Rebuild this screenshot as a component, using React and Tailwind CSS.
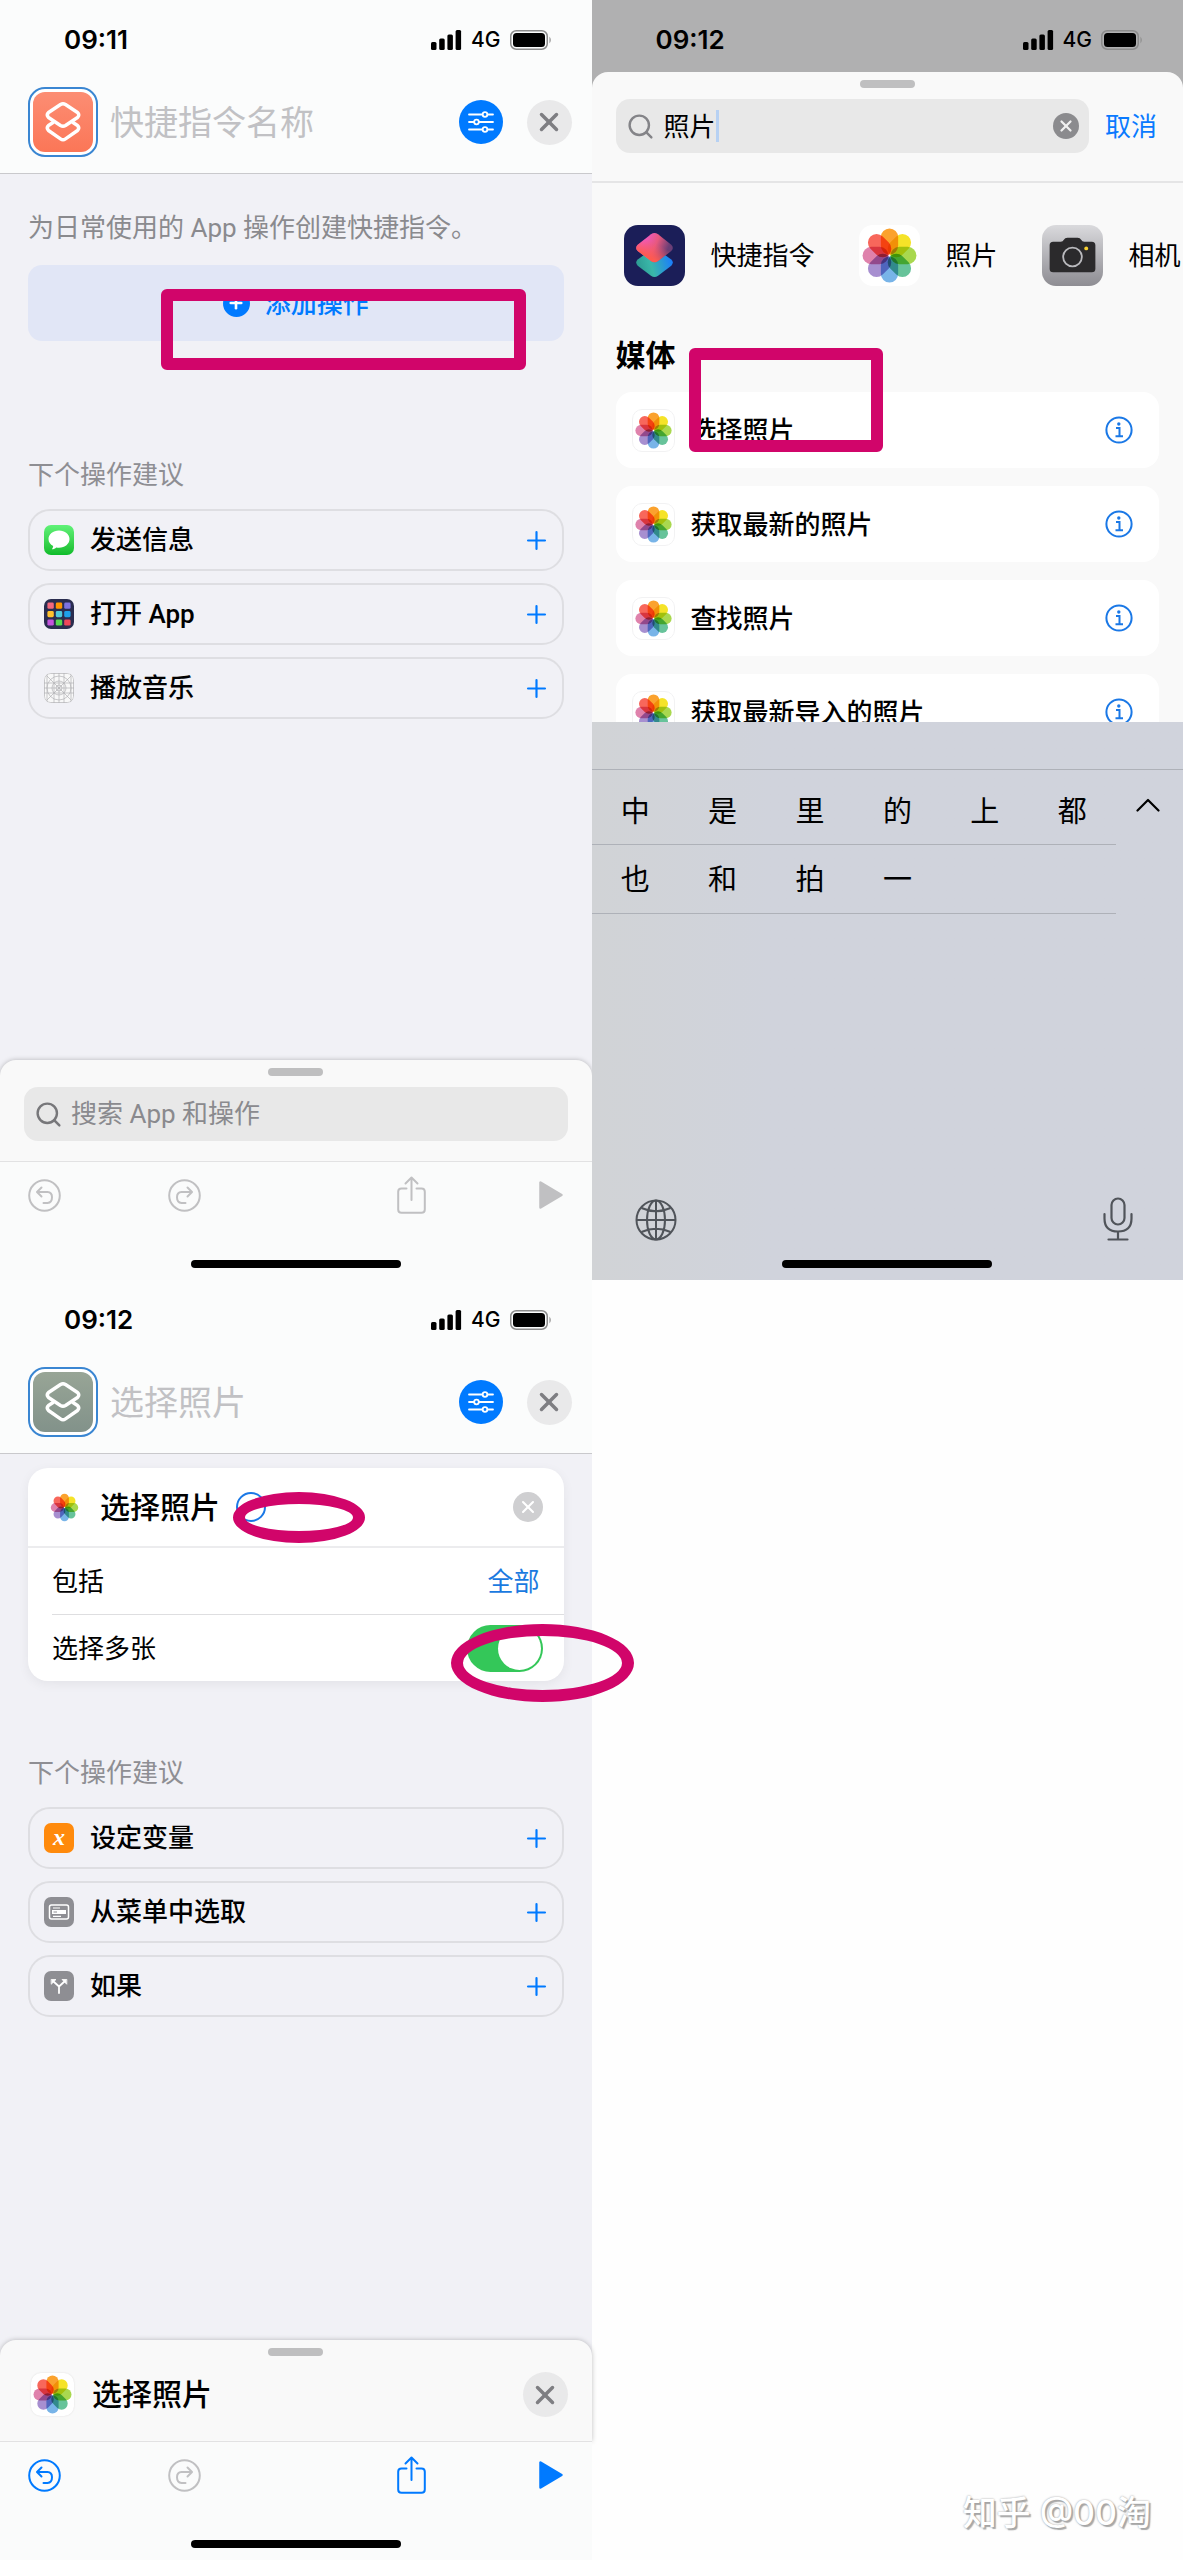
import { useState } from "react";
import { Plus, Search, X } from "lucide-react";

const petals = ["#fba22e", "#f5e328", "#a9d84f", "#67c39a", "#78b4e8", "#a78fd0", "#df82ac", "#f8675b"];

const PhotosIcon = ({ className }) => (
  <svg viewBox="0 0 60 60" className={`isolate shrink-0 bg-white ${className}`}>
    {petals.map((color, i) => (
      <rect
        key={color}
        x="21.5"
        y="3.5"
        width="17"
        height="25.5"
        rx="8.5"
        fill={color}
        transform={`rotate(${i * 45} 30 30)`}
        className="mix-blend-multiply"
      />
    ))}
  </svg>
);

const StatusBar = ({ time }) => (
  <div className="flex items-center justify-between pl-16 pr-10 leading-8">
    <span className="text-[26px] font-semibold">{time}</span>
    <div className="flex items-center gap-[9px]">
      <svg width="31" height="20" viewBox="0 0 31 20">
        <rect x="0" y="12" width="5.5" height="8" rx="1.5" />
        <rect x="8.2" y="8.5" width="5.5" height="11.5" rx="1.5" />
        <rect x="16.4" y="4.5" width="5.5" height="15.5" rx="1.5" />
        <rect x="24.6" y="0" width="5.5" height="20" rx="1.5" />
      </svg>
      <span className="text-[21px] font-medium">4G</span>
      <svg width="42" height="20" viewBox="0 0 42 20">
        <rect x="0.75" y="0.75" width="36.5" height="18.5" rx="5.5" fill="none" stroke="#8b8b8b" strokeWidth="1.5" />
        <rect x="3" y="3" width="32" height="14" rx="3.5" />
        <path d="M39.5 6.5q2.5 3.5 0 7z" fill="#8b8b8b" />
      </svg>
    </div>
  </div>
);

const CloseButton = ({ label }) => (
  <button aria-label={label} className="flex size-[45px] shrink-0 items-center justify-center rounded-full bg-[#e9e9ea] text-[#7e7e82]">
    <X size={30} strokeWidth={2.8} />
  </button>
);

const EditorHeader = ({ time, name, tile }) => (
  <header className="border-b border-[#c9c9cc] bg-[#fbfcfc] pb-4 pt-6">
    <StatusBar time={time} />
    <div className="mt-[31px] flex items-center pl-7 pr-5">
      <button aria-label="图标" className="size-[70px] shrink-0 rounded-[17px] border-2 border-[#3a86d2] bg-white p-[3px]">
        <svg viewBox="0 0 60 60" fill="none" stroke="#fff" strokeWidth="3.4" strokeLinejoin="round" strokeLinecap="round" className={`size-full rounded-xl ${tile}`}>
          <path d="M27.5 12.5Q30 11 32.5 12.5L44.5 20.5Q47 23 44.5 25.5L32.5 33.5Q30 35 27.5 33.5L15.5 25.5Q13 23 15.5 20.5Z" />
          <path d="M20 30.5L15.5 33.5Q13 36 15.5 38.5L27.5 46.8Q30 48.5 32.5 46.8L44.5 38.5Q47 36 44.5 33.5L40 30.5" />
        </svg>
      </button>
      <input
        aria-label="快捷指令名称"
        placeholder={name}
        className="ml-3 h-12 min-w-0 flex-1 bg-transparent text-[34px] placeholder:text-[#c1c1c4] outline-none"
      />
      <button aria-label="设置" className="size-11 shrink-0 rounded-full bg-[#007aff]">
        <svg viewBox="0 0 44 44" fill="#007aff" stroke="#fff" strokeWidth="1.8" strokeLinecap="round">
          <path d="M10 14.5H34M10 22H34M10 29.5H34" />
          <circle cx="26" cy="14.5" r="2.3" />
          <circle cx="17.5" cy="22" r="2.3" />
          <circle cx="26" cy="29.5" r="2.3" />
        </svg>
      </button>
      <div className="ml-6 flex">
        <CloseButton label="关闭" />
      </div>
    </div>
  </header>
);

const MessagesIcon = () => (
  <svg viewBox="0 0 30 30" className="size-full bg-linear-to-b from-[#5ff277] to-[#0abc29]">
    <path fill="#fff" d="M15 5.5C9 5.5 4.5 9.3 4.5 14c0 3 1.8 5.600 4.7 7.1-.1 1.3-.6 2.3-1.3 3.2 1.8-.2 3.3-.8 4.4-1.9.9.2 1.8.3 2.7.3 6 0 10.5-3.900 10.5-8.700S21 5.500 15 5.500z" />
  </svg>
);

const appColors = ["#f4687c", "#ff9500", "#7e73e0", "#ffc22e", "#4fc9dd", "#1ea0ea", "#c455dc", "#57d94f", "#f0475a"];

const AppsIcon = () => (
  <svg viewBox="0 0 30 30" className="size-full bg-[#2a2d4f]">
    {appColors.map((color, i) => (
      <rect key={color} x={3.4 + (i % 3) * 8.4} y={3.6 + Math.floor(i / 3) * 8.4} width="6.4" height="6.2" rx="1.4" fill={color} />
    ))}
  </svg>
);

const BlankAppIcon = () => (
  <svg viewBox="0 0 30 30" fill="none" stroke="#b2b2b4" strokeWidth="0.7" className="size-full bg-[#f8f8f8]">
    <rect x="0.5" y="0.5" width="29" height="29" rx="6" />
    <path d="M3 3L27 27M27 3L3 27M10 0V30M15 0V30M20 0V30M0 10H30M0 15H30M0 20H30M3 0V30M27 0V30" />
    <circle cx="15" cy="15" r="12" />
    <circle cx="15" cy="15" r="7" />
    <circle cx="15" cy="15" r="3" />
  </svg>
);

const VariableIcon = () => (
  <span className="flex size-full items-center justify-center bg-[#ff8a0c] pb-[3px] font-['Liberation_Serif',serif] text-2xl leading-none font-bold italic text-white">x</span>
);

const MenuIcon = () => (
  <svg viewBox="0 0 30 30" fill="none" stroke="#fff" className="size-full bg-[#8e8e93]">
    <rect x="5.5" y="8" width="19" height="14" rx="2" strokeWidth="1.5" />
    <rect x="8" y="13" width="14" height="4" fill="#fff" stroke="none" />
    <path d="M9 11H16M9 19.3H17" strokeWidth="1.2" />
    <path d="M9.5 15H13" stroke="#8e8e93" />
  </svg>
);

const BranchIcon = () => (
  <svg viewBox="0 0 30 30" fill="none" stroke="#fff" strokeWidth="1.8" strokeLinecap="round" className="size-full bg-[#8e8e93]">
    <path d="M15 22V15.5L9.5 10.5M15 15.5L20.5 10.5" />
    <path d="M7.5 8.5H12L7.5 13ZM22.5 8.5H18L22.5 13Z" fill="#fff" strokeWidth="0.8" strokeLinejoin="round" />
  </svg>
);

const Suggestions = ({ items }) => (
  <section>
    <h2 className="text-[26px] leading-8 text-[#8e8e93]">下个操作建议</h2>
    <ul className="mt-[18px] flex flex-col gap-3">
      {items.map((item) => (
        <li key={item.label}>
          <button className="flex h-[62px] w-full items-center rounded-[22px] border-2 border-[#dedee2] pl-3.5 pr-[11px] text-left">
            <span className="size-[30px] overflow-hidden rounded-[7px]">
              <item.icon />
            </span>
            <span className="ml-4 flex-1 font-['Roboto','Noto_Sans_CJK_SC',sans-serif] text-[26px] font-medium">{item.label}</span>
            <Plus size={29} strokeWidth={1.8} className="text-[#007aff]" />
          </button>
        </li>
      ))}
    </ul>
  </section>
);

const Grabber = () => <div className="mx-auto h-2 w-[55px] rounded-full bg-[#bfbfc0]" />;

const HomeIndicator = () => <div className="mx-auto h-2 w-[210px] rounded-full bg-black" />;

const BottomSheet = ({ children }) => (
  <div className="rounded-t-2xl bg-[#f9f9f9] pt-2 shadow-[0_0_5px_rgba(0,0,0,0.25)]">
    <Grabber />
    {children}
  </div>
);

const Toolbar = ({ enabled }) => {
  const tone = enabled ? "text-[#007aff]" : "text-[#c0c0c2]";
  return (
    <footer className="relative border-t border-[#e2e2e3] bg-[#fafbfb] pb-3">
      <div className="flex h-[66px] items-center px-7">
        <button aria-label="撤销" className={tone}>
          <svg width="33" height="33" viewBox="0 0 33 33" fill="none" stroke="currentColor" strokeWidth="2" strokeLinecap="round" strokeLinejoin="round">
            <circle cx="16.5" cy="16.5" r="15.3" />
            <path d="M13.5 8.5L9 13L13.5 17.5M9.5 13H19.5Q24 13.2 24 18.2Q24 23.5 19.5 24H15.5" />
          </svg>
        </button>
        <button aria-label="重做" className="ml-[107px] text-[#c0c0c2]">
          <svg width="33" height="33" viewBox="0 0 33 33" fill="none" stroke="currentColor" strokeWidth="2" strokeLinecap="round" strokeLinejoin="round">
            <circle cx="16.5" cy="16.5" r="15.3" />
            <path d="M19.5 8.5L24 13L19.5 17.5M23.5 13H13.5Q9 13.2 9 18.2Q9 23.5 13.5 24H17.5" />
          </svg>
        </button>
        <button aria-label="共享" className={`ml-auto ${tone}`}>
          <svg width="29" height="38" viewBox="0 0 29 38" fill="none" stroke="currentColor" strokeWidth="2" strokeLinecap="round" strokeLinejoin="round">
            <path d="M9.5 12.5H4.5Q1.2 12.5 1.2 15.8V33.5Q1.2 36.8 4.5 36.8H24.5Q27.8 36.8 27.8 33.5V15.8Q27.8 12.5 24.5 12.5H19.5" />
            <path d="M14.5 24V2M8.5 7.5L14.5 1.5L20.5 7.5" />
          </svg>
        </button>
        <button aria-label="播放" className={`ml-[112px] ${tone}`}>
          <svg width="26" height="30" viewBox="0 0 26 30" fill="currentColor" stroke="currentColor" strokeWidth="2.5" strokeLinejoin="round">
            <path d="M2.5 2.5V27.5L23.5 15Z" />
          </svg>
        </button>
      </div>
      <div className="mt-8">
        <HomeIndicator />
      </div>
    </footer>
  );
};

const NewShortcut = () => (
  <section className="relative flex flex-col bg-[#f1f1f6]">
    <EditorHeader time="09:11" name="快捷指令名称" tile="bg-linear-to-b from-[#fc8d73] to-[#fb7657]" />
    <main className="flex-1 px-7 pt-[38px]">
      <p className="font-['Roboto','Noto_Sans_CJK_SC',sans-serif] text-[26px] leading-8 whitespace-nowrap text-[#8a8a8e]">为日常使用的 App 操作创建快捷指令。</p>
      <button className="mt-[21px] flex h-[76px] w-full items-center justify-center gap-[15px] rounded-[14px] bg-[#e1e6f6] text-[26px] font-medium text-[#007aff]">
        <span className="flex size-[27px] items-center justify-center rounded-full bg-[#007aff] text-white">
          <Plus size={18} strokeWidth={3.5} />
        </span>
        添加操作
      </button>
      <div className="mt-[118px]">
        <Suggestions
          items={[
            { label: "发送信息", icon: MessagesIcon },
            { label: "打开 App", icon: AppsIcon },
            { label: "播放音乐", icon: BlankAppIcon },
          ]}
        />
      </div>
    </main>
    <BottomSheet>
      <div className="px-6 pb-5 pt-[11px]">
        <label className="flex h-[54px] items-center gap-2 rounded-[14px] bg-[#e8e8e8] px-2.5">
          <Search size={29} strokeWidth={2} className="text-[#77777a]" />
          <input aria-label="搜索" placeholder="搜索 App 和操作" className="min-w-0 flex-1 bg-transparent font-['Roboto','Noto_Sans_CJK_SC',sans-serif] text-[26px] outline-none placeholder:text-[#8a8a8e]" />
        </label>
      </div>
    </BottomSheet>
    <Toolbar enabled={false} />

    {/* marks the add button */}
    <div className="absolute left-[161px] top-[289px] h-[81px] w-[365px] rounded-md border-12 border-[#d1056a]" />
  </section>
);

const ShortcutsAppIcon = () => (
  <svg viewBox="0 0 60 60" className="size-[61px] shrink-0 rounded-[14px] bg-[#1b1e58]">
    <defs>
      <linearGradient id="upper" x1="0.2" y1="0.3" x2="0.8" y2="0.7" gradientTransform="rotate(-15 .5 .5)">
        <stop offset="0" stopColor="#f05ac4" />
        <stop offset="0.5" stopColor="#e8587e" />
        <stop offset="1" stopColor="#6b3e76" />
      </linearGradient>
      <linearGradient id="upperRed" x1="0.7" y1="0.2" x2="0.3" y2="0.8">
        <stop offset="0.3" stopColor="#ff5a5f" stopOpacity="0" />
        <stop offset="1" stopColor="#ff5a4f" />
      </linearGradient>
      <linearGradient id="lower" x1="0" y1="0.6" x2="1" y2="0.4">
        <stop offset="0" stopColor="#2c9a92" />
        <stop offset="0.4" stopColor="#3ab7a9" />
        <stop offset="1" stopColor="#1a7cff" />
      </linearGradient>
    </defs>
    <path d="M26.5 24.5Q30 22.5 33.5 24.5L46.5 34Q49.5 37 46.5 40L33.5 50Q30 52.5 26.5 50L13.5 40Q10.5 37 13.5 34Z" fill="url(#lower)" />
    <path d="M26.5 9Q30 6.5 33.5 9L46.5 19.5Q49.5 22.5 46.5 25.5L33.5 35.5Q30 38 26.5 35.5L13.5 25.5Q10.5 22.5 13.5 19.5Z" fill="url(#upper)" />
    <path d="M26.5 9Q30 6.5 33.5 9L46.5 19.5Q49.5 22.5 46.5 25.5L33.5 35.5Q30 38 26.5 35.5L13.5 25.5Q10.5 22.5 13.5 19.5Z" fill="url(#upperRed)" />
  </svg>
);

const CameraAppIcon = () => (
  <svg viewBox="0 0 60 60" className="size-[61px] shrink-0 rounded-[14px] bg-linear-to-b from-[#dadadd] to-[#8e8d93]">
    <path fill="#2b2a2c" d="M11 16.5H18.5Q20.5 16.5 21.5 14.5Q22.5 12.5 25 12.5H35Q37.5 12.5 38.5 14.5Q39.5 16.5 41.5 16.5H49Q52.5 16.5 52.5 20V43Q52.5 46.5 49 46.5H11Q7.5 46.5 7.5 43V20Q7.5 16.5 11 16.5Z" />
    <circle cx="30" cy="31.5" r="9.2" fill="none" stroke="#b9b9bd" strokeWidth="1.8" />
    <circle cx="43.5" cy="23" r="1.9" fill="#f8d030" />
  </svg>
);

const mediaActions = ["选择照片", "获取最新的照片", "查找照片", "获取最新导入的照片"];

const InfoIcon = () => (
  <svg width="28" height="28" viewBox="0 0 28 28" fill="none" stroke="#1a78e6" strokeWidth="2">
    <circle cx="14" cy="14" r="12.6" />
    <circle cx="13.8" cy="8" r="1.7" fill="#1a78e6" stroke="none" />
    <path d="M11 12H14.5V20M10.5 20.2H18" />
  </svg>
);

const CandidateRow = ({ words, className }) => (
  <div className={`grid grid-cols-6 border-b border-[#aeb1b8] ${className}`}>
    {words.map((word) => (
      <button key={word} className="text-[29px]">{word}</button>
    ))}
  </div>
);

const Keyboard = () => (
  <div className="relative flex h-[558px] shrink-0 flex-col bg-linear-to-r from-[#d1d3d6] to-[#d0d3dc] to-30% pb-3">
    <div className="h-12 border-b border-[#aeb1b8]" />
    <div className="flex items-start">
      <div className="flex-1">
        <CandidateRow words={["中", "是", "里", "的", "上", "都"]} className="h-[75px] pt-2.5" />
        <CandidateRow words={["也", "和", "拍", "一"]} className="h-[69px] pt-0.5" />
      </div>
      <button aria-label="收起" className="flex w-[67px] justify-center pr-1 pt-7">
        <svg width="24" height="14" viewBox="0 0 24 14" fill="none" stroke="#000" strokeWidth="2.2" strokeLinecap="round" strokeLinejoin="round">
          <path d="M1.5 12.5L12 2L22.5 12.5" />
        </svg>
      </button>
    </div>
    <div className="mt-auto flex items-center justify-between pl-[43px] pr-[50px]">
      <button aria-label="切换键盘">
        <svg width="42" height="42" viewBox="0 0 42 42" fill="none" stroke="#50545a" strokeWidth="2">
          <circle cx="21" cy="21" r="19.5" />
          <ellipse cx="21" cy="21" rx="9" ry="19.5" />
          <path d="M21 1.5V40.5M1.5 21H40.5M6.5 9Q21 15.5 35.5 9M6.5 33Q21 26.5 35.5 33" />
        </svg>
      </button>
      <button aria-label="听写">
        <svg width="30" height="45" viewBox="0 0 30 45" fill="none" stroke="#50545a" strokeWidth="2.2" strokeLinecap="round">
          <rect x="8.5" y="1.5" width="13" height="26" rx="6.5" />
          <path d="M1.5 17V21.5Q1.5 34.5 15 34.5Q28.5 34.5 28.5 21.5V17M15 34.5V42.5M5.5 42.5H24.5" />
        </svg>
      </button>
    </div>
    <div className="mt-[18px]">
      <HomeIndicator />
    </div>
  </div>
);

const SearchActions = () => (
  <section className="relative flex flex-col overflow-hidden bg-[#b0b0b1]">
    <div className="pb-4 pt-6">
      <StatusBar time="09:12" />
    </div>
    <div className="min-h-0 flex-1 basis-0 overflow-hidden rounded-t-2xl bg-[#f9f9f9] pt-2">
      <Grabber />
      <div className="flex items-center border-b-2 border-[#e5e5e6] pb-7 pl-6 pr-[26px] pt-[11px]">
        <div className="flex h-[54px] min-w-0 flex-1 items-center rounded-[14px] bg-[#e8e8e8] px-2.5">
          <Search size={29} strokeWidth={2} className="shrink-0 text-[#848488]" />
          <input aria-label="搜索" defaultValue="照片" className="field-sizing-content ml-[9px] bg-transparent text-[26px] outline-none" />
          <span className="h-8 w-[3px] bg-[#b7d1f3]" />
          <button aria-label="清除" className="ml-auto flex size-[26px] items-center justify-center rounded-full bg-[#8b8b8e] text-[#f0f0f0]">
            <X size={18} strokeWidth={3} />
          </button>
        </div>
        <button className="ml-4 text-[26px] text-[#0a7aff]">取消</button>
      </div>
      <div className="flex gap-11 pl-8 pt-[42px] text-[26px] whitespace-nowrap">
        <button className="flex items-center gap-[26px]"><ShortcutsAppIcon />快捷指令</button>
        <button className="flex items-center gap-[26px]"><PhotosIcon className="size-[61px] rounded-[14px]" />照片</button>
        <button className="flex items-center gap-[26px]"><CameraAppIcon />相机</button>
      </div>
      <h2 className="ml-6 mt-[51px] text-[30px] leading-9 font-bold">媒体</h2>
      <ul className="mt-[19px] flex flex-col gap-[18px] px-6">
        {mediaActions.map((label) => (
          <li key={label} className="flex h-[76px] shrink-0 items-center rounded-2xl bg-white pl-4 pr-[26px]">
            <PhotosIcon className="size-[43px] rounded-[10px] border border-[#f2f2f3]" />
            <span className="ml-4 flex-1 text-[26px] font-medium">{label}</span>
            <button aria-label={`${label}简介`}><InfoIcon /></button>
          </li>
        ))}
      </ul>
    </div>
    <Keyboard />

    {/* marks the first result */}
    <div className="absolute left-[97px] top-[348px] h-[104px] w-[194px] rounded-md border-12 border-[#d1056a]" />
  </section>
);

const SelectPhotos = () => {
  const [multiple, setMultiple] = useState(true);

  return (
    <section className="relative flex flex-col bg-[#f1f1f6]">
      <EditorHeader time="09:12" name="选择照片" tile="bg-linear-to-b from-[#98a596] to-[#82928a]" />
      <main className="flex-1 px-7 pt-3.5">
        <div className="rounded-[20px] bg-white text-[26px] shadow-[0_3px_12px_rgba(0,0,0,0.06)]">
          <div className="flex h-20 items-center border-b-2 border-[#ececee] px-[21px]">
            <PhotosIcon className="size-[31px]" />
            <span className="ml-5 text-[30px] font-medium">选择照片</span>
            <button aria-label="展开" className="ml-4 flex size-[30px] items-center justify-center rounded-full border-2 border-[#1a78e6]">
              <svg width="14" height="8" viewBox="0 0 14 8" fill="none" stroke="#1a78e6" strokeWidth="2">
                <path d="M1 1L7 7L13 1" />
              </svg>
            </button>
            <button aria-label="移除" className="ml-auto flex size-[30px] items-center justify-center rounded-full bg-[#cfcfd1] text-white">
              <X size={20} strokeWidth={2.5} />
            </button>
          </div>
          <div className="ml-6 flex h-[67px] items-center justify-between border-b border-[#dedee0] pr-6">
            <span>包括</span>
            <button className="text-[#1a7ae0]">全部</button>
          </div>
          <label className="ml-6 flex h-[66px] items-center justify-between pr-[21px]">
            选择多张
            <input type="checkbox" checked={multiple} onChange={() => setMultiple(!multiple)} className="peer sr-only" />
            <span className="flex h-[47px] w-[76px] items-center rounded-full bg-[#e9e9ea] p-0.5 peer-checked:justify-end peer-checked:bg-[#34c759]">
              <span className="size-[43px] rounded-full bg-white" />
            </span>
          </label>
        </div>
        <div className="mt-[76px]">
          <Suggestions
            items={[
              { label: "设定变量", icon: VariableIcon },
              { label: "从菜单中选取", icon: MenuIcon },
              { label: "如果", icon: BranchIcon },
            ]}
          />
        </div>
      </main>
      <BottomSheet>
        <div className="flex items-center pb-6 pl-[31px] pr-6 pt-4">
          <PhotosIcon className="size-[43px] rounded-[10px] shadow-[0_0_2px_rgba(0,0,0,0.12)]" />
          <h2 className="ml-[18px] flex-1 text-[30px] font-medium">选择照片</h2>
          <CloseButton label="关闭" />
        </div>
      </BottomSheet>
      <Toolbar enabled />

      {/* marks the expand arrow and the switch */}
      <div className="absolute left-[233px] top-[212px] h-[51px] w-[132px] rounded-[50%] border-12 border-[#d1056a]" />
      <div className="absolute left-[451px] top-[344px] z-10 h-[78px] w-[183px] rounded-[50%] border-12 border-[#d1056a]" />
    </section>
  );
};

export default function App() {
  return (
    <div className="grid min-h-screen grid-cols-2 grid-rows-2 bg-[#fefefe] font-['Inter','Noto_Sans_CJK_SC',sans-serif] text-black">
      <NewShortcut />
      <SearchActions />
      <SelectPhotos />
      <div className="flex items-end justify-end pb-[22px] pr-8">
        <p className="text-[34px] font-medium text-white [text-shadow:0_0_2px_#999,2px_2px_1px_#aaa]">知乎 @00淘</p>
      </div>
    </div>
  );
}
